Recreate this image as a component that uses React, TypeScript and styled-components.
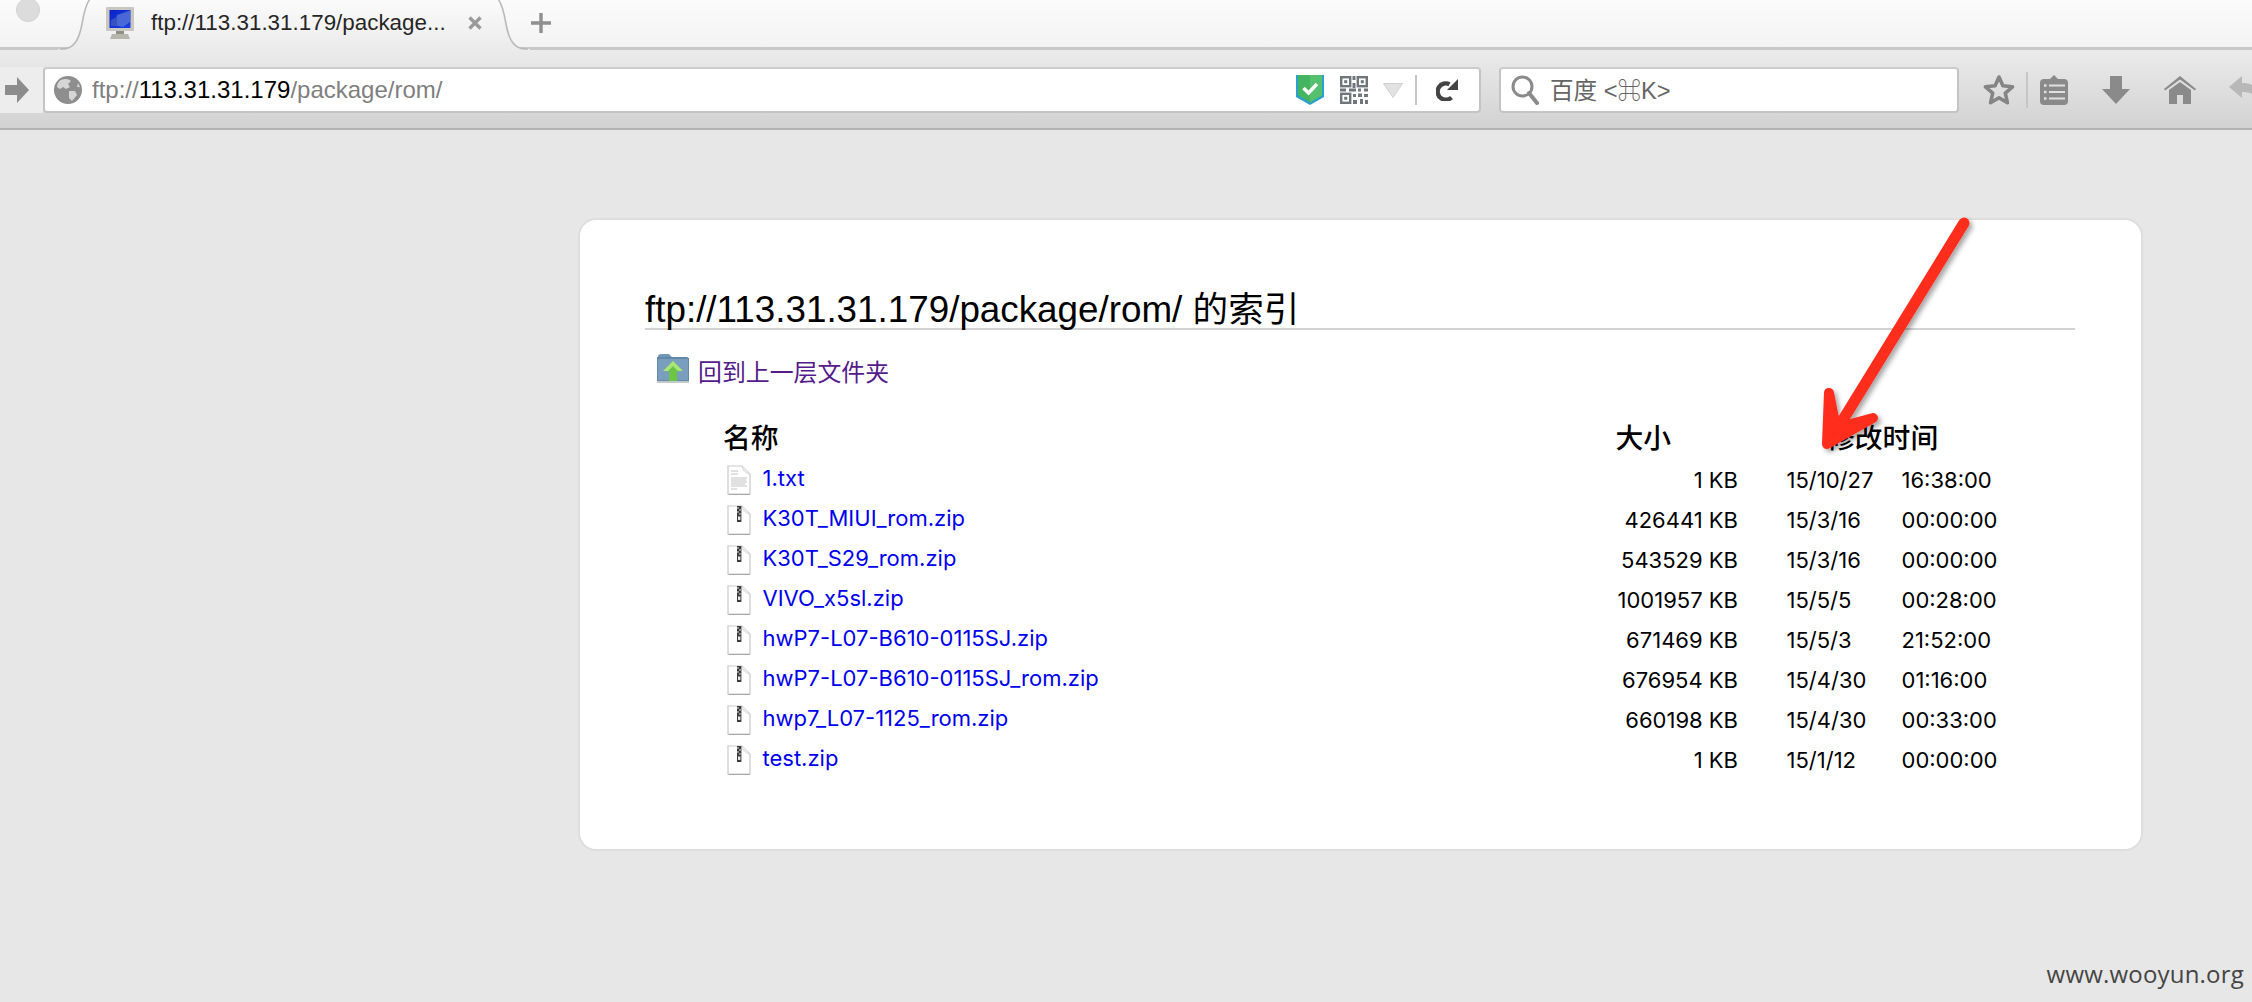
import React from "react";
import styled, { createGlobalStyle } from "styled-components";

const Global = createGlobalStyle`
  html, body { margin: 0; padding: 0; background: #e7e7e7; }
  body { font-family: "Liberation Sans", "Noto Sans CJK SC", sans-serif; overflow: hidden; }
  #root { width: 2252px; height: 1002px; }
`;

const CJK = `"Liberation Sans", "Noto Sans CJK SC", "DejaVu Sans", sans-serif`;
const ListFont = `Inter, "Liberation Sans", sans-serif`;

const Frame = styled.div`
  position: relative;
  width: 2252px;
  height: 1002px;
  overflow: hidden;
  background: #e7e7e7;
`;

const TabBar = styled.div`
  display: flex;
  align-items: flex-start;
  height: 50px;
  box-sizing: border-box;
  background: linear-gradient(#fbfbfb, #f3f3f3 94%, #c8c8c8 94%, #c8c8c8 100%);
`;

const WindowDot = styled.div`
  width: 24px;
  height: 24px;
  margin: -2px 18px 0 16px;
  flex: none;
  border-radius: 50%;
  background: #dcdcdc;
  border: 1px solid #d2d2d2;
  box-sizing: border-box;
`;

const TabCurve = styled.svg`
  display: block;
  flex: none;
  width: 32px;
  height: 50px;
`;

const TabBody = styled.div`
  display: flex;
  align-items: center;
  width: 408px;
  height: 50px;
  padding: 0 0 4px 16px;
  box-sizing: border-box;
  background: linear-gradient(#fbfbfb, #ebebeb);
`;

const TabIcon = styled.svg`
  display: block;
  flex: none;
  width: 28px;
  height: 32px;
`;

const TabTitle = styled.span`
  margin-left: 17px;
  font-size: 22.4px;
  color: #262626;
  white-space: nowrap;
`;

const TabClose = styled.svg`
  display: block;
  flex: none;
  width: 16px;
  height: 16px;
  margin-left: 21px;
`;

const NewTab = styled.svg`
  display: block;
  flex: none;
  width: 22px;
  height: 22px;
  margin: 12px 0 0 0;
`;

const NavBar = styled.div`
  display: flex;
  align-items: center;
  height: 80px;
  box-sizing: border-box;
  padding-top: 2px;
  background: linear-gradient(#ebebeb, #d2d2d2);
  border-bottom: 2px solid #b4b4b4;
`;

const ForwardButton = styled.div`
  display: flex;
  align-items: center;
  justify-content: center;
  width: 43px;
  height: 46px;
  padding-right: 9px;
  box-sizing: border-box;
  flex: none;
  background: #ededed;
`;

const Field = styled.div<{ $width: number; $left: number; $pad: number; $padRight?: number }>`
  display: flex;
  align-items: center;
  flex: none;
  width: ${(p) => p.$width}px;
  height: 46px;
  margin-left: ${(p) => p.$left}px;
  padding-left: ${(p) => p.$pad}px;
  padding-right: ${(p) => p.$padRight ?? 0}px;
  box-sizing: border-box;
  background: #fff;
  border: 2px solid #c4c4c4;
  border-top-color: #cbcbcb;
  border-radius: 4px;
`;

const UrlText = styled.span`
  margin-left: 10px;
  font-size: 24px;
  color: #7f7f7f;
  white-space: nowrap;
  flex: 1;
`;

const UrlHost = styled.span`
  color: #000;
`;

const FieldIcon = styled.svg<{ $w: number; $h: number; $left?: number }>`
  display: block;
  flex: none;
  width: ${(p) => p.$w}px;
  height: ${(p) => p.$h}px;
  margin-left: ${(p) => p.$left ?? 0}px;
`;

const Divider = styled.div<{ $left: number; $h: number }>`
  flex: none;
  width: 2px;
  height: ${(p) => p.$h}px;
  margin-left: ${(p) => p.$left}px;
  background: #c6c6c6;
`;

const SearchText = styled.span`
  margin-left: 11px;
  padding-bottom: 2px;
  font-family: ${CJK};
  font-size: 23.6px;
  color: #666;
  white-space: nowrap;
`;

const Content = styled.main`
  padding: 88px 0 0 578px;
`;

const Card = styled.section`
  width: 1565px;
  height: 633px;
  box-sizing: border-box;
  padding: 46px 66px 0 65px;
  background: #fff;
  border: 2px solid #dedede;
  border-radius: 18px;
`;

const Heading = styled.h1`
  margin: 0;
  height: 64px;
  box-sizing: border-box;
  padding-top: 25px;
  font-family: ${CJK};
  font-weight: 400;
  font-size: 36.8px;
  line-height: 37px;
  color: #000;
  border-bottom: 2px solid #d2d2d2;
  white-space: nowrap;
`;

const HeadingCjk = styled.span`
  font-size: 35.6px;
`;

const ParentRow = styled.div`
  display: flex;
  align-items: flex-start;
  height: 80px;
  padding: 23px 0 0 12px;
  box-sizing: border-box;
`;

const ParentLink = styled.a`
  margin: 6px 0 0 9px;
  font-family: ${CJK};
  font-size: 23.9px;
  line-height: 28px;
  color: #551a8b;
`;

const Listing = styled.div`
  padding-left: 81.5px;
`;

const Row = styled.div`
  display: grid;
  grid-template-columns: 36px 853px 122.5px 163.5px 91px;
  align-items: center;
  height: 40px;
`;

const HeadRow = styled(Row)`
  height: 50px;
  margin-left: -3.5px;
  align-items: end;
  padding-bottom: 3px;
  box-sizing: border-box;
  font-family: ${CJK};
  font-size: 27.8px;
  line-height: 36px;
  font-weight: 500;
  color: #000;
`;

const HeadName = styled.span`
  grid-column: 1 / span 2;
`;

const HeadSize = styled.span`
  grid-column: 3;
  padding-left: 3.5px;
  white-space: nowrap;
`;

const HeadTime = styled.span`
  grid-column: 4 / span 2;
  padding-left: 92.5px;
  white-space: nowrap;
`;

const FileLink = styled.a`
  padding-bottom: 5px;
  font-family: ${ListFont};
  font-size: 22px;
  color: #0000ee;
  white-space: nowrap;
`;

const Size = styled.span`
  font-family: ${ListFont};
  font-size: 22px;
  color: #000;
  text-align: right;
  white-space: nowrap;
`;

const DateCell = styled.span`
  padding-left: 48.5px;
  font-family: ${ListFont};
  font-size: 22px;
  color: #000;
  white-space: nowrap;
`;

const TimeCell = styled.span`
  font-family: ${ListFont};
  font-size: 22px;
  color: #000;
  white-space: nowrap;
`;

const FileGlyph = styled.svg`
  display: block;
  width: 24px;
  height: 30px;
`;

const Arrow = styled.svg`
  position: absolute;
  left: 1800px;
  top: 205px;
  width: 190px;
  height: 260px;
  overflow: visible;
`;

const Watermark = styled.div`
  position: absolute;
  right: 8px;
  bottom: 12px;
  font-family: "Open Sans", sans-serif;
  font-size: 24px;
  letter-spacing: 0.2px;
  color: #454545;
`;

const files = [
  ["1.txt", "1 KB", "15/10/27", "16:38:00"],
  ["K30T_MIUI_rom.zip", "426441 KB", "15/3/16", "00:00:00"],
  ["K30T_S29_rom.zip", "543529 KB", "15/3/16", "00:00:00"],
  ["VIVO_x5sl.zip", "1001957 KB", "15/5/5", "00:28:00"],
  ["hwP7-L07-B610-0115SJ.zip", "671469 KB", "15/5/3", "21:52:00"],
  ["hwP7-L07-B610-0115SJ_rom.zip", "676954 KB", "15/4/30", "01:16:00"],
  ["hwp7_L07-1125_rom.zip", "660198 KB", "15/4/30", "00:33:00"],
  ["test.zip", "1 KB", "15/1/12", "00:00:00"],
];

function PageIcon({ zip }: { zip: boolean }) {
  return (
    <FileGlyph viewBox="0 0 24 30">
      <path d="M1 1H15L23 9V29H1Z" fill="#fff" stroke="#c9c9c9" strokeWidth="1.2" />
      <path d="M15 1C16 5 18 8 23 9" fill="#f1f1f1" stroke="#d4d4d4" strokeWidth="1" />
      <path d="M1.5 29.5H23" stroke="#a8a8a8" strokeWidth="1" />
      {zip ? (
        <g>
          <rect x="10" y="1" width="4.4" height="16" fill="#3c3c3c" />
          <path d="M10 3H12M12 5H14M10 7H12M12 9H14" stroke="#ddd" strokeWidth="1" />
          <rect x="11" y="11.5" width="2.4" height="3.4" fill="#eee" />
        </g>
      ) : (
        <path
          d="M4 6H11M4 9H11M4 13H20M4 15H19M4 17H20M4 19H18M4 21H20M4 24H10"
          stroke="#c2c2c2"
          strokeWidth="1"
        />
      )}
    </FileGlyph>
  );
}

const Qr = () => (
  <FieldIcon $w={28} $h={28} $left={16} viewBox="0 0 28 28">
    <g fill="none" stroke="#6f767c" strokeWidth="2.4">
      <rect x="1.2" y="1.2" width="9" height="9" />
      <rect x="17.8" y="1.2" width="9" height="9" />
      <rect x="1.2" y="17.8" width="9" height="9" />
    </g>
    <g fill="#6f767c">
      <rect x="4.2" y="4.2" width="3" height="3" />
      <rect x="20.8" y="4.2" width="3" height="3" />
      <rect x="4.2" y="20.8" width="3" height="3" />
      <rect x="12.5" y="0" width="3" height="4" />
      <rect x="12.5" y="7" width="3" height="5" />
      <rect x="0" y="12.5" width="6" height="3" />
      <rect x="9" y="12.5" width="7" height="3" />
      <rect x="18" y="12.5" width="3" height="3" />
      <rect x="24" y="12.5" width="4" height="3" />
      <rect x="13" y="18" width="3" height="3" />
      <rect x="18" y="17.5" width="4" height="3.5" />
      <rect x="24" y="18" width="4" height="3" />
      <rect x="13" y="24" width="4" height="4" />
      <rect x="20" y="23" width="3" height="5" />
      <rect x="25" y="24" width="3" height="4" />
    </g>
  </FieldIcon>
);

export default function App() {
  return (
    <Frame>
      <Global />
      <svg width="0" height="0" style={{ position: "absolute" }}>
        <defs>
          <linearGradient id="tabfill" x1="0" y1="0" x2="0" y2="1">
            <stop offset="0" stopColor="#fbfbfb" />
            <stop offset="1" stopColor="#ebebeb" />
          </linearGradient>
          <linearGradient id="screen" x1="0" y1="0" x2="1" y2="1">
            <stop offset="0" stopColor="#0a22c8" />
            <stop offset="1" stopColor="#1d3fe0" />
          </linearGradient>
          <filter id="arrowshadow" x="-20%" y="-20%" width="140%" height="140%">
            <feDropShadow dx="3" dy="3" stdDeviation="2.5" floodColor="#000" floodOpacity="0.35" />
          </filter>
        </defs>
      </svg>

      <TabBar>
        <WindowDot />
        <TabCurve viewBox="0 0 32 50">
          <path d="M0 50V49H4C16 49 21 40 24 24C26 12 28 4 32 -1V50Z" fill="url(#tabfill)" />
          <path d="M2 49H4C16 49 21 40 24 24C26 12 28 4 32 -1" fill="none" stroke="#b9b9b9" strokeWidth="1.6" />
        </TabCurve>
        <TabBody>
          <TabIcon viewBox="0 0 28 32">
            <rect x="0" y="0" width="28" height="24" rx="1" fill="#c9c7bf" />
            <rect x="3.5" y="3" width="21" height="18" fill="url(#screen)" />
            <path d="M11 8L24 3.5V15L17 20L8 18Z" fill="#5f7fd8" opacity="0.7" />
            <path d="M5 13L11 10V19H5Z" fill="#3553c0" />
            <rect x="10" y="24" width="8" height="3" fill="#8f8f86" />
            <path d="M6 27H22L24 32H4Z" fill="#b7b7ae" />
          </TabIcon>
          <TabTitle>ftp://113.31.31.179/package...</TabTitle>
          <TabClose viewBox="0 0 16 16">
            <path d="M2.5 2.5L13.5 13.5M13.5 2.5L2.5 13.5" stroke="#9a9a9a" strokeWidth="3.4" />
          </TabClose>
        </TabBody>
        <TabCurve viewBox="0 0 32 50">
          <path d="M32 50V49H28C16 49 11 40 8 24C6 12 4 4 0 -1V50Z" fill="url(#tabfill)" />
          <path d="M30 49H28C16 49 11 40 8 24C6 12 4 4 0 -1" fill="none" stroke="#b9b9b9" strokeWidth="1.6" />
        </TabCurve>
        <NewTab viewBox="0 0 22 22">
          <path d="M11 1V21M1 11H21" stroke="#8f8f8f" strokeWidth="3.4" />
        </NewTab>
      </TabBar>

      <NavBar>
        <ForwardButton>
          <svg width="24" height="26" viewBox="0 0 24 26">
            <path d="M12 0L24 13L12 26V18H0V8H12Z" fill="#8c8c8c" />
          </svg>
        </ForwardButton>
        <Field $width={1438} $left={0} $pad={9} $padRight={21}>
          <FieldIcon $w={28} $h={28} viewBox="0 0 28 28">
            <circle cx="14" cy="14" r="14" fill="#8e8e8e" />
            <path
              d="M7 4C11 2 15 3 17 5L14 8L16 11L12 13L9 11L6 13L3 11C3 8 5 5 7 4ZM15 15L21 15L23 19L18 25L15 22ZM24 7L26 11L23 11Z"
              fill="#d6d6d6"
            />
          </FieldIcon>
          <UrlText>
            ftp://<UrlHost>113.31.31.179</UrlHost>/package/rom/
          </UrlText>
          <FieldIcon $w={28} $h={30} viewBox="0 0 28 30">
            <path d="M0 0H28V22L14 30L0 22Z" fill="#2a9fd0" />
            <path d="M2 0H26V20.5L14 27.5L2 20.5Z" fill="#43b45f" />
            <path d="M14 0H26V20.5L14 27.5Z" fill="#55c06e" />
            <path d="M7.5 13L12.5 18L21 9" fill="none" stroke="#fff" strokeWidth="3.4" />
          </FieldIcon>
          <Qr />
          <FieldIcon $w={20} $h={15} $left={15} viewBox="0 0 20 15">
            <path d="M0.5 0.5H19.5L10 14.5Z" fill="#e2e2e2" stroke="#cfcfcf" />
          </FieldIcon>
          <Divider $left={12} $h={30} />
          <FieldIcon $w={22} $h={22} $left={19} viewBox="0 0 22 22">
            <path d="M15.5 18.5A8.2 8.2 0 1 1 13.5 5.2" fill="none" stroke="#444" strokeWidth="4.4" />
            <path d="M22 0V11H11Z" fill="#444" />
          </FieldIcon>
        </Field>
        <Field $width={460} $left={18} $pad={10}>
          <FieldIcon $w={28} $h={30} viewBox="0 0 28 30">
            <ellipse cx="11.5" cy="11.5" rx="9.5" ry="9.5" fill="none" stroke="#8a8a8a" strokeWidth="3" />
            <path d="M18 18L26 28" stroke="#8a8a8a" strokeWidth="4" strokeLinecap="round" />
          </FieldIcon>
          <SearchText>百度 &lt;⌘K&gt;</SearchText>
        </Field>
        <FieldIcon $w={32} $h={32} $left={24} viewBox="0 0 32 32">
          <path
            d="M16 3L19.9 11.8L29.5 12.8L22.3 19.2L24.4 28.7L16 23.8L7.6 28.7L9.7 19.2L2.5 12.8L12.1 11.8Z"
            fill="none"
            stroke="#858585"
            strokeWidth="3.6"
            strokeLinejoin="round"
          />
        </FieldIcon>
        <Divider $left={11} $h={36} />
        <FieldIcon $w={28} $h={30} $left={12} viewBox="0 0 28 30">
          <path d="M14 0L19 5H9Z" fill="#8a8a8a" />
          <rect x="0" y="4" width="28" height="26" rx="4" fill="#8a8a8a" />
          <path d="M9 10.5H25M9 17H25M9 23.5H25" stroke="#e0e0e0" strokeWidth="2" />
          <path d="M4 10.5H6.5M4 17H6.5M4 23.5H6.5" stroke="#e0e0e0" strokeWidth="2.4" />
        </FieldIcon>
        <FieldIcon $w={28} $h={28} $left={34} viewBox="0 0 28 28">
          <path d="M8 0H20V13H28L14 28L0 13H8Z" fill="#8a8a8a" />
        </FieldIcon>
        <FieldIcon $w={32} $h={28} $left={34} viewBox="0 0 32 28">
          <path d="M16 0L32 13L31 14.5L16 3.5L1 14.5L0 13Z" fill="#8a8a8a" />
          <path d="M16 6L27 14V28H19V19H13V28H5V14Z" fill="#8a8a8a" />
        </FieldIcon>
        <FieldIcon $w={32} $h={28} $left={33} viewBox="0 0 32 28">
          <path d="M0 11L13 0V7C24 7 32 12 32 28C28 19 22 16 13 16V22Z" fill="#b8b8b8" />
        </FieldIcon>
      </NavBar>

      <Content>
        <Card>
          <Heading>
            ftp://113.31.31.179/package/rom/ <HeadingCjk>的索引</HeadingCjk>
          </Heading>
          <ParentRow>
            <svg width="32" height="30" viewBox="0 0 32 30">
              <path d="M1 4C1 2 2 1 4 1H12L15 4H29C31 4 32 5 32 7V27H0V4Z" fill="#6f97b8" />
              <rect x="0" y="5" width="32" height="23" rx="2" fill="#7a9fbe" stroke="#4f7491" />
              <rect x="0" y="28" width="32" height="2" fill="#c2c8cc" />
              <path d="M16 8L26 18H20V28H12V18H6Z" fill="#6cc644" />
              <path d="M16 8L26 18H21L16 13L11 18H6Z" fill="#a8e67a" />
            </svg>
            <ParentLink>回到上一层文件夹</ParentLink>
          </ParentRow>
          <Listing>
            <HeadRow>
              <HeadName>名称</HeadName>
              <HeadSize>大小</HeadSize>
              <HeadTime>修改时间</HeadTime>
            </HeadRow>
            {files.map(([name, size, date, time]) => (
              <Row key={name}>
                <PageIcon zip={name.endsWith(".zip")} />
                <FileLink>{name}</FileLink>
                <Size>{size}</Size>
                <DateCell>{date}</DateCell>
                <TimeCell>{time}</TimeCell>
              </Row>
            ))}
          </Listing>
        </Card>
      </Content>

      <Arrow viewBox="1800 205 190 260">
        <g
          fill="none"
          stroke="#ff2d1e"
          strokeWidth="10"
          strokeLinecap="round"
          strokeLinejoin="round"
          filter="url(#arrowshadow)"
        >
          <path d="M1964 223L1833 436" strokeWidth="11" />
          <path d="M1829 393L1827 444L1873 418L1836 428Z" fill="#ff2d1e" />
        </g>
      </Arrow>

      <Watermark>www.wooyun.org</Watermark>
    </Frame>
  );
}
